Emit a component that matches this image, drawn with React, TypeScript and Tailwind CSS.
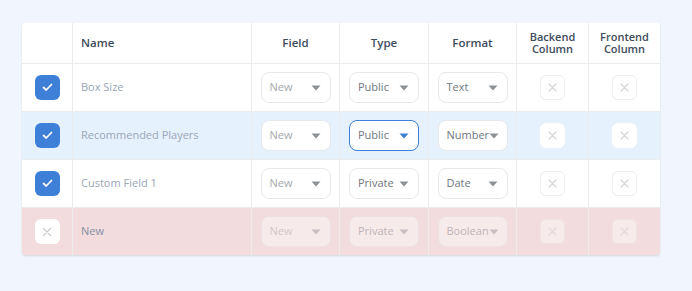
import React from 'react';

type Row = {
  name: string;
  checked: boolean;
  field: string;
  type: string;
  format: string;
  active?: boolean;
  removed?: boolean;
};

const rows: Row[] = [
  { name: 'Box Size', checked: true, field: 'New', type: 'Public', format: 'Text' },
  { name: 'Recommended Players', checked: true, field: 'New', type: 'Public', format: 'Number', active: true },
  { name: 'Custom Field 1', checked: true, field: 'New', type: 'Private', format: 'Date' },
  { name: 'New', checked: false, field: 'New', type: 'Private', format: 'Boolean', removed: true },
];

const cols = 'grid grid-cols-[50px_179px_88px_89px_88px_72px_72px]';

function Caret({ blue }: { blue?: boolean }) {
  return (
    <svg width="10" height="6" viewBox="0 0 10 6" className="shrink-0">
      <path d="M0.5 0.5 L9.5 0.5 L5 5.5 Z" fill={blue ? '#3e7fd7' : '#8d9299'} />
    </svg>
  );
}

function Select({ value, focused, muted, dim }: { value: string; focused?: boolean; muted?: boolean; dim?: boolean }) {
  return (
    <div
      className={`flex h-[31px] w-[70px] items-center justify-between rounded-lg border bg-white pl-2 pr-[9px] text-[11px] ${
        focused ? 'border-[#3e7fd7]' : 'border-[#e6e8eb]'
      } ${muted ? 'text-[#a3a8ae]' : 'text-[#6f7780]'} ${dim ? 'opacity-40' : ''}`}
    >
      <span>{value}</span>
      <Caret blue={focused} />
    </div>
  );
}

function XBox({ dim, filled }: { dim?: boolean; filled?: boolean }) {
  return (
    <div
      className={`flex h-[25px] w-[25px] items-center justify-center rounded-md border ${
        filled ? 'border-white bg-white' : 'border-[#eceef0] bg-white'
      } ${dim ? 'opacity-40' : ''}`}
    >
      <svg width="9" height="9" viewBox="0 0 9 9">
        <path d="M1 1 L8 8 M8 1 L1 8" stroke="#d4d6d9" strokeWidth="1.3" strokeLinecap="round" />
      </svg>
    </div>
  );
}

function Check({ checked }: { checked: boolean }) {
  if (!checked) {
    return (
      <div className="flex h-[25px] w-[25px] items-center justify-center rounded-md bg-white">
        <svg width="10" height="10" viewBox="0 0 10 10">
          <path d="M1.5 1.5 L8.5 8.5 M8.5 1.5 L1.5 8.5" stroke="#c9cbce" strokeWidth="1.3" strokeLinecap="round" />
        </svg>
      </div>
    );
  }
  return (
    <div className="flex h-[25px] w-[25px] items-center justify-center rounded-md bg-[#3e7fd7]">
      <svg width="11" height="9" viewBox="0 0 11 9">
        <path d="M1.5 4.5 L4.2 7 L9.5 1.5" fill="none" stroke="white" strokeWidth="1.8" strokeLinecap="round" strokeLinejoin="round" />
      </svg>
    </div>
  );
}

export default function App() {
  return (
    <div className="min-h-[291px] w-[692px] bg-[#f0f5fe] pl-[22px] pt-[23px]" style={{ fontFamily: '"Open Sans", sans-serif' }}>
      <div className="w-[638px] overflow-hidden rounded-[3px] bg-white shadow-[0_1px_2px_rgba(0,0,0,0.12)]">
        {/* Header */}
        <div className={`${cols} h-[40px] text-[11px] font-semibold leading-[12px] text-[#3d4b5c]`}>
          <div />
          <div className="flex items-center border-l border-[#ececec] pl-[8px] text-[11.5px]">Name</div>
          <div className="flex items-center justify-center border-l border-[#ececec] text-[11.5px]">Field</div>
          <div className="flex items-center justify-center border-l border-[#ececec] text-[11.5px]">Type</div>
          <div className="flex items-center justify-center border-l border-[#ececec] text-[11.5px]">Format</div>
          <div className="flex items-center justify-center border-l border-[#ececec] text-center">
            Backend
            <br />
            Column
          </div>
          <div className="flex items-center justify-center border-l border-[#ececec] text-center">
            Frontend
            <br />
            Column
          </div>
        </div>

        {rows.map((r) => (
          <div
            key={r.name}
            className={`${cols} h-[48px] border-t border-[#ececec] ${
              r.active ? 'bg-[#e5f1fd]' : r.removed ? 'bg-[#f2dcdd]' : 'bg-white'
            }`}
          >
            <div className="flex items-center justify-center">
              <Check checked={r.checked} />
            </div>
            <div className={`flex items-center border-l border-[#ececec] pl-[8px] text-[11px] ${r.removed ? 'text-[#8790a3]' : 'text-[#9ba6b6]'}`}>
              {r.name}
            </div>
            <div className="flex items-center justify-center border-l border-[#ececec]">
              <Select value={r.field} muted dim={r.removed} />
            </div>
            <div className="flex items-center justify-center border-l border-[#ececec]">
              <Select value={r.type} focused={r.active} dim={r.removed} />
            </div>
            <div className="flex items-center justify-center border-l border-[#ececec]">
              <Select value={r.format} dim={r.removed} />
            </div>
            <div className="flex items-center justify-center border-l border-[#ececec]">
              <XBox dim={r.removed} filled={r.active} />
            </div>
            <div className="flex items-center justify-center border-l border-[#ececec]">
              <XBox dim={r.removed} filled={r.active} />
            </div>
          </div>
        ))}
      </div>
    </div>
  );
}
